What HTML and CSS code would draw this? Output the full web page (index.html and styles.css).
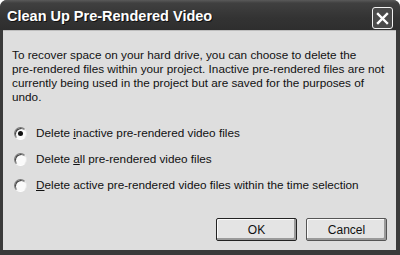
FILE: index.html
```html
<!DOCTYPE html>
<html>
<head>
<meta charset="utf-8">
<link rel="stylesheet" href="styles.css">
</head>
<body>
<div class="window">
  <div class="titlebar">
    <span class="title">Clean Up Pre-Rendered Video</span>
    <span class="close">
      <svg width="13" height="13" viewBox="0 0 13 13"><path d="M2 2 L11 11 M11 2 L2 11" stroke="#fff" stroke-width="2.4" stroke-linecap="square"/></svg>
    </span>
  </div>
  <div class="client">
    <p class="intro">To recover space on your hard drive, you can choose to delete the<br>pre-rendered files within your project. Inactive pre-rendered files are not<br>currently being used in the project but are saved for the purposes of<br>undo.</p>
    <div class="options">
      <label class="option"><span class="radio checked"></span><span>Delete <u>i</u>nactive pre-rendered video files</span></label>
      <label class="option"><span class="radio"></span><span>Delete <u>a</u>ll pre-rendered video files</span></label>
      <label class="option"><span class="radio"></span><span><u>D</u>elete active pre-rendered video files within the time selection</span></label>
    </div>
    <div class="buttons">
      <button class="btn default">OK</button>
      <button class="btn">Cancel</button>
    </div>
  </div>
</div>
</body>
</html>
```

FILE: styles.css
```css
html, body {
  margin: 0;
  padding: 0;
  background: #ffffff;
}
.window {
  width: 400px;
  height: 255px;
  background: #3a3a3a;
  border-radius: 7px 7px 0 0;
  display: flex;
  flex-direction: column;
  overflow: hidden;
}
.titlebar {
  height: 30px;
  flex: none;
  display: flex;
  align-items: center;
  justify-content: space-between;
  padding: 0 7px 0 7px;
  background: linear-gradient(#5a5a5a 0, #404040 3px, #333333 60%, #2e2e2e 100%);
}
.title {
  color: #ffffff;
  font-family: "Liberation Sans", Arial, sans-serif;
  font-weight: bold;
  font-size: 14.5px;
  text-shadow: 1px 1px 0 #111;
  margin-top: 2px;
}
.close {
  width: 19px;
  height: 20px;
  border: 1px solid #f2f2f2;
  border-radius: 3px;
  background: #4a4a4a;
  display: flex;
  align-items: center;
  justify-content: center;
  margin-top: 6px;
}
.client {
  flex: 1;
  margin: 0 4px 5px 3px;
  background: #dedede;
  border-top: 1px solid #bdbdbd;
  display: flex;
  flex-direction: column;
  padding: 17px 4px 9px 9px;
  font-family: "Liberation Sans", Arial, sans-serif;
  font-size: 11.75px;
  color: #111;
}
.intro {
  margin: 0;
  line-height: 14px;
  white-space: nowrap;
}
.options {
  margin-top: 22px;
  display: flex;
  flex-direction: column;
  gap: 12px;
}
.option {
  display: flex;
  align-items: center;
  height: 14px;
  line-height: 14px;
}
.radio {
  width: 11px;
  height: 11px;
  border-radius: 50%;
  margin-left: 2px;
  margin-right: 9px;
  background: #fafafa;
  border: 1px solid;
  border-color: #777 #e8e8e8 #ffffff #777;
  box-shadow: inset 1px 1px 0 #444;
  position: relative;
  flex: none;
}
.radio.checked::after {
  content: "";
  position: absolute;
  left: 3px;
  top: 3px;
  width: 5px;
  height: 5px;
  border-radius: 50%;
  background: #111;
}
.buttons {
  margin-top: auto;
  margin-right: 5px;
  display: flex;
  justify-content: flex-end;
  gap: 9px;
}
.btn {
  width: 81px;
  height: 23px;
  background: #e4e4e4;
  border: 1px solid #555;
  border-radius: 2px;
  box-shadow: inset -2px -2px 0 #9a9a9a, inset 1px 1px 0 #fbfbfb;
  font-family: "Liberation Sans", Arial, sans-serif;
  font-size: 12px;
  color: #111;
  padding: 0;
}
.btn.default {
  border-color: #222;
}
```
